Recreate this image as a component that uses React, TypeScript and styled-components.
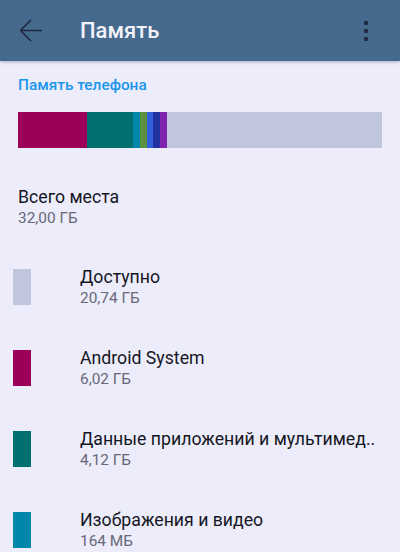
import React from "react";
import styled, { createGlobalStyle } from "styled-components";

const Global = createGlobalStyle`
  html, body { margin: 0; padding: 0; }
  body {
    background: #ececfb;
    font-family: Roboto, "Noto Sans", "Liberation Sans", sans-serif;
    width: 400px;
    height: 552px;
    overflow: hidden;
  }
`;

const Page = styled.div`
  display: flex;
  flex-direction: column;
  width: 400px;
  height: 552px;
  background: #ececfb;
  overflow: hidden;
`;

const AppBar = styled.header`
  height: 61px;
  flex: 0 0 61px;
  background: #466a8e;
  display: flex;
  align-items: center;
  box-shadow: 0 1px 3px rgba(40, 50, 90, 0.35);
  position: relative;
  z-index: 1;
`;

const IconButton = styled.div`
  width: 24px;
  height: 24px;
  display: flex;
  align-items: center;
  justify-content: center;
  margin-left: 19px;
`;

const Title = styled.h1`
  margin: 0 0 0 37px;
  font-size: 22px;
  line-height: 28px;
  font-weight: 500;
  color: #f2f2f8;
  flex: 1;
`;

const Kebab = styled.div`
  width: 8px;
  display: flex;
  flex-direction: column;
  align-items: center;
  gap: 4px;
  margin-right: 30px;
`;

const Dot = styled.span`
  width: 4px;
  height: 4px;
  border-radius: 1px;
  background: #1e2a44;
`;

const Content = styled.main`
  display: flex;
  flex-direction: column;
  padding: 14px 0 0 0;
`;

const SectionHeader = styled.div`
  padding-left: 18px;
  font-size: 15.4px;
  line-height: 20px;
  font-weight: 500;
  color: #1b96ea;
`;

const Bar = styled.div`
  margin: 17px 18px 0 18px;
  height: 36px;
  display: flex;
  background: #c0c6dd;
`;

const Segment = styled.div<{ $c: string }>`
  height: 100%;
  background: ${(p) => p.$c};
  flex: 0 0 auto;
`;

const Total = styled.div`
  margin-top: 38px;
  padding-left: 18px;
  display: flex;
  flex-direction: column;
`;

const PrimaryText = styled.div`
  font-size: 17.7px;
  line-height: 22px;
  color: #16161f;
  white-space: nowrap;
  overflow: hidden;
`;

const SecondaryText = styled.div`
  font-size: 15.4px;
  line-height: 20px;
  color: #686878;
`;

const List = styled.div`
  margin-top: 18px;
  display: flex;
  flex-direction: column;
`;

const Row = styled.div`
  height: 81px;
  display: flex;
  align-items: center;
  padding-left: 13px;
`;

const Swatch = styled.div<{ $c: string }>`
  width: 18px;
  height: 36px;
  background: ${(p) => p.$c};
  flex: 0 0 18px;
`;

const RowText = styled.div`
  margin-left: 49px;
  display: flex;
  flex-direction: column;
  min-width: 0;
  flex: 1;
  padding-right: 10px;
`;

const segments = [
  { c: "#9c0058", w: 68.5 },
  { c: "#007070", w: 46 },
  { c: "#0088aa", w: 7.5 },
  { c: "#5e9042", w: 6.5 },
  { c: "#3060dc", w: 6 },
  { c: "#2330a0", w: 7.5 },
  { c: "#7f22b0", w: 6.5 },
];

const items = [
  { c: "#c0c6dd", title: "Доступно", size: "20,74 ГБ" },
  { c: "#9c0058", title: "Android System", size: "6,02 ГБ" },
  { c: "#007070", title: "Данные приложений и мультимед..", size: "4,12 ГБ" },
  { c: "#0088aa", title: "Изображения и видео", size: "164 МБ" },
];

export default function App() {
  return (
    <Page>
      <Global />
      <AppBar>
        <IconButton>
          <svg width="25" height="25" viewBox="0 0 25 25" fill="none">
            <path
              d="M24 12.5H1.5M1.5 12.5L12.5 1.5M1.5 12.5L12.5 23.5"
              stroke="#1e2740"
              strokeWidth="1.6"
            />
          </svg>
        </IconButton>
        <Title>Память</Title>
        <Kebab>
          <Dot />
          <Dot />
          <Dot />
        </Kebab>
      </AppBar>
      <Content>
        <SectionHeader>Память телефона</SectionHeader>
        <Bar>
          {segments.map((s, i) => (
            <Segment key={i} $c={s.c} style={{ width: s.w }} />
          ))}
        </Bar>
        <Total>
          <PrimaryText>Всего места</PrimaryText>
          <SecondaryText>32,00 ГБ</SecondaryText>
        </Total>
        <List>
          {items.map((it) => (
            <Row key={it.title}>
              <Swatch $c={it.c} />
              <RowText>
                <PrimaryText>{it.title}</PrimaryText>
                <SecondaryText>{it.size}</SecondaryText>
              </RowText>
            </Row>
          ))}
        </List>
      </Content>
    </Page>
  );
}
